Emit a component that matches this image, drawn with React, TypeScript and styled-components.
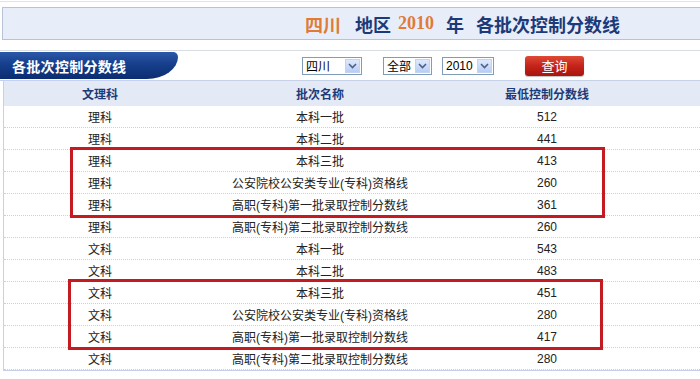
import React from "react";
import styled, { createGlobalStyle } from "styled-components";

const Global = createGlobalStyle`
  html, body { margin: 0; padding: 0; background: #fff; }
  body { font-family: "Liberation Sans", "Noto Sans CJK SC", sans-serif; font-size: 12px; color: #222; overflow: hidden; }
`;

const Page = styled.div`
  width: 700px;
  height: 379px;
  overflow: hidden;
  display: flex;
  flex-direction: column;
`;

const TopRule = styled.div`
  height: 1px;
  margin-top: 1px;
  background: #dfe3ea;
`;

const TitleBar = styled.div`
  margin: 5px 0 0 2px;
  height: 31px;
  border: 1px solid #b7c3d7;
  border-right: none;
  background: #e8eef9;
  display: flex;
  align-items: center;
  padding-left: 302px;
  font-family: "Noto Sans CJK SC", sans-serif;
  font-size: 18px;
  font-weight: bold;
  color: #1d3a78;
  white-space: nowrap;
`;

const TitleWord = styled.span<{ $accent?: boolean; $serif?: boolean; $gap?: number }>`
  color: ${(p) => (p.$accent ? "#e07b35" : "#1d3a78")};
  font-family: ${(p) => (p.$serif ? '"Liberation Serif", serif' : '"Noto Sans CJK SC", sans-serif')};
  margin-right: ${(p) => p.$gap ?? 10}px;
`;

const Toolbar = styled.div`
  margin-top: 10px;
  height: 29px;
  border-top: 1px solid #d9dde4;
  border-bottom: 1px solid #c4d1e6;
  display: flex;
  align-items: center;
`;

const Tab = styled.div`
  align-self: flex-start;
  margin-top: 1px;
  width: 166px;
  height: 27px;
  padding-left: 12px;
  display: flex;
  align-items: center;
  background: linear-gradient(180deg, #2a58a8 0%, #163f8c 45%, #0c2c70 100%);
  border-top-right-radius: 6px;
  border-bottom-right-radius: 38px 27px;
  color: #fff;
  font-family: "Noto Sans CJK SC", sans-serif;
  font-size: 14px;
  font-weight: bold;
  letter-spacing: 0.3px;
`;

const Filters = styled.div`
  display: flex;
  align-items: center;
  margin-left: 124px;
`;

const SelectBox = styled.div<{ $w: number; $gap: number }>`
  width: ${(p) => p.$w}px;
  height: 18px;
  box-sizing: border-box;
  border: 1px solid #7f9db9;
  background: #fff;
  display: flex;
  align-items: center;
  justify-content: space-between;
  margin-right: ${(p) => p.$gap}px;
  font-family: "Liberation Sans", "Noto Sans CJK SC", sans-serif;
  font-size: 12px;
  color: #000;
  padding-left: 3px;
`;

const Arrow = styled.span`
  width: 15px;
  height: 14px;
  margin-right: 1px;
  background: linear-gradient(180deg, #dfe9fd 0%, #b9cdf4 100%);
  border: 1px solid #c3d3f4;
  box-sizing: border-box;
  display: flex;
  align-items: center;
  justify-content: center;
`;

const QueryButton = styled.button`
  margin-left: 31px;
  width: 59px;
  height: 20px;
  border: none;
  border-radius: 3px;
  background: linear-gradient(180deg, #de4a36 0%, #c5231a 50%, #a8150f 100%);
  color: #fff;
  font-family: "Noto Sans CJK SC", sans-serif;
  font-size: 13px;
  padding: 0;
  line-height: 20px;
  box-shadow: 0 1px 1px rgba(0, 0, 0, 0.25);
`;

const Table = styled.div`
  margin-left: 3px;
  border-left: 1px solid #c4d1e6;
  border-bottom: 1px solid #c4d1e6;
  display: flex;
  flex-direction: column;
`;

const Row = styled.div<{ $head?: boolean }>`
  display: grid;
  grid-template-columns: 192px 248px 206px 1fr;
  height: ${(p) => (p.$head ? 25 : 22)}px;
  align-items: center;
  background: ${(p) => (p.$head ? "#e3eaf6" : "#fff")};
  border-bottom: ${(p) => (p.$head ? "none" : "1px dotted #d0d0d0")};
  box-sizing: border-box;
  font-family: "Liberation Sans", "Noto Sans CJK SC", sans-serif;
  font-size: 12px;
  font-weight: ${(p) => (p.$head ? "bold" : "normal")};
  color: ${(p) => (p.$head ? "#1d3a78" : "#222")};
`;

const Cell = styled.div`
  text-align: center;
  white-space: nowrap;
`;

const Group = styled.div`
  position: relative;
`;

const Highlight = styled.div<{ $left: number }>`
  position: absolute;
  left: ${(p) => p.$left}px;
  width: 535px;
  top: -3px;
  bottom: -2px;
  border: 3px solid #c41b22;
  box-sizing: border-box;
  pointer-events: none;
`;

type R = [string, string, string];

const li: R[] = [
  ["理科", "本科一批", "512"],
  ["理科", "本科二批", "441"],
];
const liMark: R[] = [
  ["理科", "本科三批", "413"],
  ["理科", "公安院校公安类专业(专科)资格线", "260"],
  ["理科", "高职(专科)第一批录取控制分数线", "361"],
];
const mid: R[] = [
  ["理科", "高职(专科)第二批录取控制分数线", "260"],
  ["文科", "本科一批", "543"],
  ["文科", "本科二批", "483"],
];
const wenMark: R[] = [
  ["文科", "本科三批", "451"],
  ["文科", "公安院校公安类专业(专科)资格线", "280"],
  ["文科", "高职(专科)第一批录取控制分数线", "417"],
];
const tail: R[] = [["文科", "高职(专科)第二批录取控制分数线", "280"]];

const Rows = ({ data }: { data: R[] }) => (
  <>
    {data.map((r, i) => (
      <Row key={i}>
        <Cell>{r[0]}</Cell>
        <Cell>{r[1]}</Cell>
        <Cell>{r[2]}</Cell>
        <Cell />
      </Row>
    ))}
  </>
);

const Chevron = () => (
  <svg width="9" height="6" viewBox="0 0 9 6">
    <path d="M1 1 L4.5 4.5 L8 1" fill="none" stroke="#4d6185" strokeWidth="1.6" />
  </svg>
);

export default function App() {
  return (
    <Page>
      <Global />
      <TopRule />
      <TitleBar>
        <TitleWord $accent $gap={14}>四川</TitleWord>
        <TitleWord $gap={7}>地区</TitleWord>
        <TitleWord $accent $serif $gap={12}>2010</TitleWord>
        <TitleWord $gap={12}>年</TitleWord>
        <TitleWord $gap={0}>各批次控制分数线</TitleWord>
      </TitleBar>
      <Toolbar>
        <Tab>各批次控制分数线</Tab>
        <Filters>
          <SelectBox $w={60} $gap={21}>
            四川
            <Arrow>
              <Chevron />
            </Arrow>
          </SelectBox>
          <SelectBox $w={49} $gap={10}>
            全部
            <Arrow>
              <Chevron />
            </Arrow>
          </SelectBox>
          <SelectBox $w={52} $gap={0}>
            2010
            <Arrow>
              <Chevron />
            </Arrow>
          </SelectBox>
          <QueryButton>查询</QueryButton>
        </Filters>
      </Toolbar>
      <Table>
        <Row $head>
          <Cell>文理科</Cell>
          <Cell>批次名称</Cell>
          <Cell>最低控制分数线</Cell>
          <Cell />
        </Row>
        <Rows data={li} />
        <Group>
          <Rows data={liMark} />
          <Highlight $left={66} />
        </Group>
        <Rows data={mid} />
        <Group>
          <Rows data={wenMark} />
          <Highlight $left={64} />
        </Group>
        <Rows data={tail} />
      </Table>
    </Page>
  );
}
